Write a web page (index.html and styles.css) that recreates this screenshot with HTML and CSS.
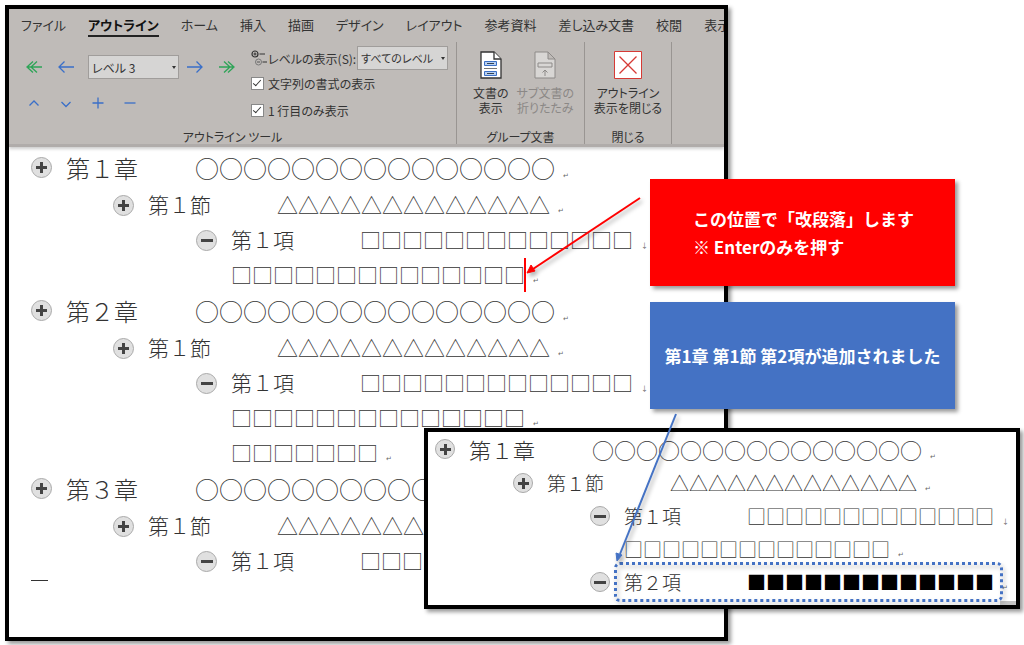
FILE: index.html
```html
<!DOCTYPE html>
<html lang="ja">
<head>
  <meta charset="UTF-8" />
  <meta name="viewport" content="width=device-width, initial-scale=1.0" />
  <title>アウトライン表示</title>
  <link rel="stylesheet" href="styles.css">
</head>
<body>
  <main class="stage">
    <section class="window">
      <header class="ribbon">
        <nav class="tabs">
          <a href="#">ファイル</a>
          <a href="#" class="active">アウトライン</a>
          <a href="#">ホーム</a>
          <a href="#">挿入</a>
          <a href="#">描画</a>
          <a href="#">デザイン</a>
          <a href="#">レイアウト</a>
          <a href="#">参考資料</a>
          <a href="#">差し込み文書</a>
          <a href="#">校閲</a>
          <a href="#">表示</a>
        </nav>

        <div class="groups">
          <div class="group">
            <div class="group-body tools">
              <div class="levels">
                <div class="level-row">
                  <button type="button" class="tool green" aria-label="見出し 1 に昇格"><svg width="18" height="14" viewBox="0 0 18 14"><path d="M17 7H3M8 1.5L2 7l6 5.5M12 1.5L6 7l6 5.5"/></svg></button>
                  <button type="button" class="tool" aria-label="レベル上げ"><svg width="18" height="14" viewBox="0 0 18 14"><path d="M17 7H2M7.500 1.500L2 7l5.500 5.500"/></svg></button>
                  <span class="drop current"><select class="level-select" aria-label="アウトライン レベル"><option>レベル 3</option></select></span>
                  <button type="button" class="tool" aria-label="レベル下げ"><svg width="18" height="14" viewBox="0 0 18 14"><path d="M1 7h15M10.500 1.500L16 7l-5.500 5.500"/></svg></button>
                  <button type="button" class="tool green" aria-label="標準文字列"><svg width="18" height="14" viewBox="0 0 18 14"><path d="M1 7h14M10 1.500L16 7l-6 5.500M6 1.500L12 7l-6 5.500"/></svg></button>
                </div>
                <div class="level-row">
                  <button type="button" class="tool" aria-label="1 つ上のレベルへ移動"><svg width="12" height="14" viewBox="0 0 12 14"><path d="M1.500 9.500L6 5l4.500 4.500"/></svg></button>
                  <button type="button" class="tool" aria-label="1 つ下のレベルへ移動"><svg width="12" height="14" viewBox="0 0 12 14"><path d="M1.500 6L6 10.500 10.500 6"/></svg></button>
                  <button type="button" class="tool" aria-label="展開"><svg width="12" height="14" viewBox="0 0 12 14"><path d="M.500 7h11M6 1.500v11"/></svg></button>
                  <button type="button" class="tool" aria-label="折りたたみ"><svg width="12" height="14" viewBox="0 0 12 14"><path d="M.500 7h11"/></svg></button>
                </div>
              </div>
              <div class="options">
                <div class="option">
                  <svg width="16" height="18" viewBox="0 0 16 18" fill="none" stroke="#333"><circle cx="4" cy="5" r="3" stroke-width="1.200"/><path d="M2.500 5h3M4 3.500v3M8.500 5H14M11.500 13H16"/><circle cx="7.500" cy="13" r="3" stroke="#777"/><path d="M6 13h3" stroke="#555"/></svg>
                  <label for="showLevel">レベルの表示(S):</label>
                  <span class="drop"><select id="showLevel" class="level-select"><option>すべてのレベル</option></select></span>
                </div>
                <label class="option check"><input type="checkbox" checked />文字列の書式の表示</label>
                <label class="option check"><input type="checkbox" checked />1 行目のみ表示</label>
              </div>
            </div>
            <div class="group-name">アウトライン ツール</div>
          </div>

          <div class="group master">
            <div class="group-body">
              <button type="button" class="big">
                <svg width="22" height="28" viewBox="0 0 22 28"><path d="M1 1h13l7 7v19H1z" fill="#fff" stroke="#333" stroke-width="1.300"/><path d="M14 1v7h7" fill="#fff" stroke="#333" stroke-width="1.300"/><path d="M4.500 10.500h12v4h-12zM4.500 20.500h12v4h-12z" fill="#b9d0f0" stroke="#3b6fc4"/><path d="M7 12.500h7M7 22.500h7" stroke="#345"/><path d="M4 17.500h13" stroke="#777"/></svg>
                <span>文書の<br>表示</span>
              </button>
              <button type="button" class="big" disabled>
                <svg width="22" height="28" viewBox="0 0 22 28" fill="#d8d6d4" stroke="#8d8a88"><path d="M1 1h13l7 7v19H1zM14 1v7h7"/><path d="M4 12h14v4H4zM11 25v-6M8.500 21.500L11 19l2.500 2.500" fill="none"/></svg>
                <span>サブ文書の<br>折りたたみ</span>
              </button>
            </div>
            <div class="group-name">グループ文書</div>
          </div>

          <div class="group close">
            <div class="group-body">
              <button type="button" class="big">
                <svg width="28" height="28" viewBox="0 0 28 28" fill="#fff" stroke="#d63a35"><path d="M.500.500h27v27H.500z"/><path d="M5.500 5.500l17 17M22.500 5.500l-17 17" stroke-width="1.300"/></svg>
                <span>アウトライン<br>表示を閉じる</span>
              </button>
            </div>
            <div class="group-name">閉じる</div>
          </div>
        </div>
      </header>

      <div class="outline">
        <div class="row lv1"><i class="mark plus"></i><p><span class="num">第１章</span>○○○○○○○○○○○○○○○<small>↵</small></p></div>
        <div class="row lv2"><i class="mark plus"></i><p><span class="num">第１節</span>△△△△△△△△△△△△△<small>↵</small></p></div>
        <div class="row lv3"><i class="mark"></i><p><span class="num">第１項</span>□□□□□□□□□□□□□<small>↓</small><br>□□□□□□□□□□□□□□<small>↵</small></p></div>
        <div class="row lv1"><i class="mark plus"></i><p><span class="num">第２章</span>○○○○○○○○○○○○○○○<small>↵</small></p></div>
        <div class="row lv2"><i class="mark plus"></i><p><span class="num">第１節</span>△△△△△△△△△△△△△<small>↵</small></p></div>
        <div class="row lv3"><i class="mark"></i><p><span class="num">第１項</span>□□□□□□□□□□□□□<small>↓</small><br>□□□□□□□□□□□□□□<small>↵</small><br>□□□□□□□<small>↵</small></p></div>
        <div class="row lv1"><i class="mark plus"></i><p><span class="num">第３章</span>○○○○○○○○○○</p></div>
        <div class="row lv2"><i class="mark plus"></i><p><span class="num">第１節</span>△△△△△△△</p></div>
        <div class="row lv3"><i class="mark"></i><p><span class="num">第１項</span>□□□</p></div>
        <div class="doc-end"></div>
      </div>
    </section>

    <aside class="callout red">
      <p>この位置で「改段落」します<br>※ Enterのみを押す</p>
    </aside>
    <aside class="callout blue">
      <p>第1章 第1節 第2項が追加されました</p>
    </aside>

    <section class="inset">
      <div class="outline small">
        <div class="row lv1"><i class="mark plus"></i><p><span class="num">第１章</span>○○○○○○○○○○○○○○○<small>↵</small></p></div>
        <div class="row lv2"><i class="mark plus"></i><p><span class="num">第１節</span>△△△△△△△△△△△△△<small>↵</small></p></div>
        <div class="row lv3"><i class="mark"></i><p><span class="num">第１項</span>□□□□□□□□□□□□□<small>↓</small><br>□□□□□□□□□□□□□□<small>↵</small></p></div>
        <div class="row lv3"><i class="mark"></i><p><span class="num">第２項</span><b>■■■■■■■■■■■■■</b><small>↵</small></p></div>
      </div>
      <div class="corner"></div>
      <div class="highlight"></div>
    </section>

    <div class="caret"></div>
    <svg class="arrow arrow-red" width="120" height="84" viewBox="0 0 120 84"><path d="M117 4L10 75" stroke="#f00" stroke-width="2"/><path d="M4 79l4-8 4 6z" fill="#f00" stroke="#f00"/></svg>
    <svg class="arrow arrow-blue" width="66" height="154" viewBox="0 0 66 154"><path d="M62 3L6 143" stroke="#4472c4" stroke-width="2"/><path d="M3 150l-1-8 6 2z" fill="#4472c4" stroke="#4472c4"/></svg>
  </main>
</body>
</html>
```
FILE: styles.css
```css
body {
  margin: 0;
  background: #fff;
  color: #333;
  font-family: 'Noto Sans CJK JP', sans-serif;
}
p {
  margin: 0;
}
svg {
  display: block;
  flex: none;
}
button {
  padding: 0;
  border: none;
  background: none;
  color: inherit;
  font: inherit;
  cursor: pointer;
}
.stage {
  position: relative;
  padding: 5px 5px 4px;
}
.window {
  box-sizing: border-box;
  width: 71.3%;
  border: 4px solid #000;
  box-shadow: 3px 3px 4px rgba(0,0,0,0.4);
  overflow: hidden;
}

/* ribbon */
.ribbon {
  background: #bfbbb8;
  border-bottom: 3px solid #b0acaa;
  box-shadow: 0 2px 3px rgba(0,0,0,0.2);
  font-size: 12px;
  font-feature-settings: "palt";
}
.tabs {
  display: flex;
  gap: 22px;
  height: 33px;
  padding-left: 12px;
}
.tabs a {
  flex: none;
  height: 26px;
  line-height: 32px;
  font-size: 13px;
  color: #333;
  text-decoration: none;
}
.tabs .active {
  font-weight: bold;
  color: #111;
  border-bottom: 2px solid #222;
}
.groups {
  display: flex;
  height: 102px;
}
.group {
  display: flex;
  flex-direction: column;
  justify-content: space-between;
  box-sizing: border-box;
  flex: 0 0 448px;
  border-right: 1px solid #999592;
}
.master {
  flex-basis: 128px;
}
.close {
  flex-basis: 87px;
}
.group-body {
  display: flex;
  justify-content: center;
  gap: 8px;
}
.master .group-body {
  padding-left: 6px;
}
.group-name {
  text-align: center;
  line-height: 14px;
}
.group-body.tools {
  justify-content: flex-start;
}
.levels {
  display: flex;
  flex-direction: column;
  gap: 12px;
  width: 225px;
  padding: 13px 0 0 9px;
}
.level-row {
  display: flex;
  align-items: center;
  height: 24px;
}
.tool {
  display: flex;
  justify-content: center;
  width: 32px;
}
.tool path {
  fill: none;
  stroke: #3a6fc8;
  stroke-width: 1.3;
}
.green path {
  stroke: #2ea457;
}
.drop {
  position: relative;
  display: flex;
}
.current {
  margin-left: 6px;
}
.drop::after {
  content: "";
  position: absolute;
  right: 3px;
  top: 11px;
  border: 2px solid transparent;
  border-top: 3px solid #333;
}
.level-select {
  appearance: none;
  width: 91px;
  height: 24px;
  padding: 0 0 0 3px;
  border: 1px solid #a09d9b;
  border-radius: 0;
  background: #d6d5d4;
  color: #333;
  font: inherit;
  font-feature-settings: inherit;
}
.options .level-select {
  font-size: 11px;
}
.options {
  padding-top: 4px;
}
.option {
  display: flex;
  align-items: center;
  gap: 1px;
  height: 24px;
}
.check {
  gap: 4px;
  height: 27px;
}
.check input {
  appearance: none;
  width: 13px;
  height: 13px;
  margin: 0;
  border: 1px solid #888;
  background: #fff;
}
.check input:checked::before {
  content: "";
  display: block;
  width: 7px;
  height: 3px;
  margin: 2px 0 0 1px;
  border: solid #333;
  border-width: 0 0 1px 1px;
  transform: rotate(-48deg);
}
.big {
  display: flex;
  flex-direction: column;
  align-items: center;
  gap: 6px;
  padding-top: 9px;
  line-height: 15px;
}
.big:disabled {
  color: #8b8886;
}

/* outline */
.outline {
  padding: 2px 0 56px 22px;
  font-weight: 300;
  font-size: 21px;
  line-height: 35px;
  white-space: nowrap;
}
.row {
  display: flex;
}
.lv1 {
  font-size: 24px;
  line-height: 38px;
}
.lv2 {
  padding-left: 82px;
}
.lv3 {
  padding-left: 165px;
}
.mark {
  flex: none;
  box-sizing: border-box;
  width: 21px;
  height: 21px;
  margin: 8px 14px 0 0;
  border: 1px solid #aaa;
  border-radius: 50%;
  background:
    linear-gradient(#444, #444) center / 12px 3px no-repeat,
    #e0e0e0;
}
.plus {
  background:
    linear-gradient(#444, #444) center / 11px 3px no-repeat,
    linear-gradient(#444, #444) center / 3px 11px no-repeat,
    #e0e0e0;
}
.num {
  display: inline-block;
  width: 129px;
}
.outline small {
  margin-left: 8px;
  font-size: 7px;
  font-weight: 400;
  line-height: 1;
  color: #666;
}
.outline b {
  font-weight: 400;
  color: #000;
}
.doc-end {
  width: 17px;
  height: 1px;
  margin-top: 2px;
  background: #333;
}

/* inset window */
.inset {
  position: absolute;
  left: 424px;
  right: 4px;
  top: 428px;
  border: 4px solid #000;
  background: #fff;
  box-shadow: 3px 3px 4px rgba(0,0,0,0.4);
}
.small {
  padding: 0 0 7px 7px;
  font-size: 19px;
  line-height: 33px;
}
.small .lv1 {
  font-size: 22px;
  line-height: 34px;
}
.small .lv2 {
  padding-left: 78px;
}
.small .lv3 {
  padding-left: 155px;
}
.small .mark {
  width: 20px;
  height: 20px;
  margin: 7px 14px 0 0;
}
.small .num {
  width: 123px;
}
.corner {
  position: absolute;
  right: 0;
  bottom: 0;
  width: 16px;
  height: 4px;
  background: #c4c4c4;
}
.highlight {
  position: absolute;
  left: 186px;
  right: 13px;
  bottom: 3px;
  height: 34px;
  border: 3px dotted #4472c4;
  border-radius: 6px;
  filter: drop-shadow(2px 3px 2px rgba(0,0,0,0.3));
}

/* annotations */
.callout {
  position: absolute;
  left: 650px;
  display: flex;
  align-items: center;
  box-sizing: border-box;
  width: 305px;
  height: 107px;
  color: #fff;
  font-size: 17px;
  font-weight: bold;
  line-height: 28px;
  box-shadow: 3px 3px 4px rgba(0,0,0,0.4);
}
.red {
  top: 179px;
  padding-left: 43px;
  background: #f00;
}
.blue {
  top: 302px;
  justify-content: center;
  background: #4472c4;
}
.caret {
  position: absolute;
  left: 524px;
  top: 258px;
  width: 2px;
  height: 34px;
  background: #f00;
}
.arrow {
  position: absolute;
  fill: none;
  filter: drop-shadow(2px 3px 2px rgba(0,0,0,0.35));
}
.arrow-red {
  left: 523px;
  top: 194px;
}
.arrow-blue {
  left: 614px;
  top: 411px;
}
```
